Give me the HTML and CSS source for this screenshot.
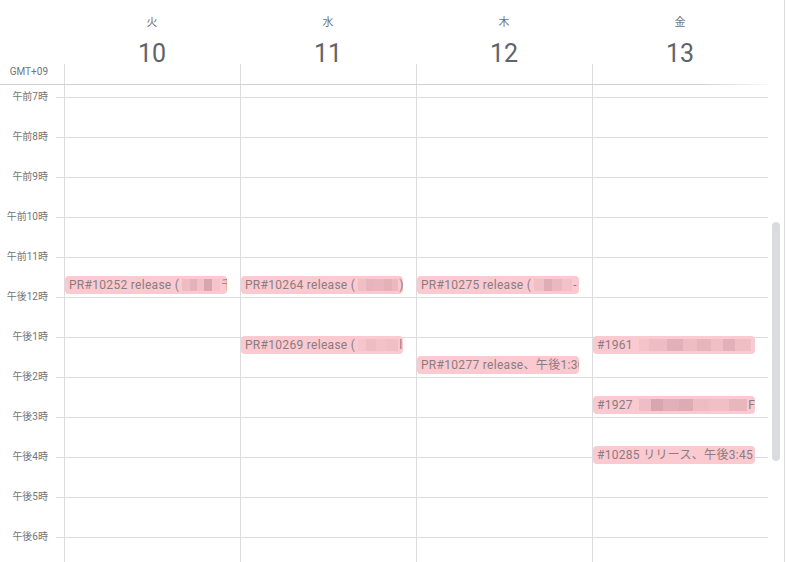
FILE: index.html
```html
<!DOCTYPE html>
<html lang="ja">

<head>
    <meta charset="UTF-8">
    <meta name="viewport" content="width=device-width, initial-scale=1.0">
    <title>Week</title>
    <link rel="stylesheet" href="styles.css">
</head>

<body>
    <div class="cal">
        <div class="main">
            <!-- day headers -->
            <div class="head">
                <div class="head-gutter"><span class="tz">GMT+09</span></div>
                <div class="head-day"><div class="dow">火</div><div class="date">10</div><div class="stub"></div></div>
                <div class="head-day"><div class="dow">水</div><div class="date">11</div><div class="stub"></div></div>
                <div class="head-day"><div class="dow">木</div><div class="date">12</div><div class="stub"></div></div>
                <div class="head-day"><div class="dow">金</div><div class="date">13</div><div class="stub"></div></div>
            </div>
            <div class="head-rule"></div>

            <div class="grid">
                <div class="gutter">
                    <div class="spacer"></div>
                    <div class="hour"><span class="lbl">午前7時</span><i class="tick"></i></div>
                    <div class="hour"><span class="lbl">午前8時</span><i class="tick"></i></div>
                    <div class="hour"><span class="lbl">午前9時</span><i class="tick"></i></div>
                    <div class="hour"><span class="lbl">午前10時</span><i class="tick"></i></div>
                    <div class="hour"><span class="lbl">午前11時</span><i class="tick"></i></div>
                    <div class="hour"><span class="lbl">午後12時</span><i class="tick"></i></div>
                    <div class="hour"><span class="lbl">午後1時</span><i class="tick"></i></div>
                    <div class="hour"><span class="lbl">午後2時</span><i class="tick"></i></div>
                    <div class="hour"><span class="lbl">午後3時</span><i class="tick"></i></div>
                    <div class="hour"><span class="lbl">午後4時</span><i class="tick"></i></div>
                    <div class="hour"><span class="lbl">午後5時</span><i class="tick"></i></div>
                    <div class="hour"><span class="lbl">午後6時</span><i class="tick"></i></div>
                </div>

                <div class="day">
                    <div class="spacer"></div>
                    <div class="slot"></div><div class="slot"></div><div class="slot"></div><div class="slot"></div>
                    <div class="slot"></div><div class="slot"></div><div class="slot"></div><div class="slot"></div>
                    <div class="slot"></div><div class="slot"></div><div class="slot"></div><div class="slot"></div>
                    <div class="event" style="top: 191px">PR#10252 release (<span class="blur b1"></span>千</div>
                </div>

                <div class="day">
                    <div class="spacer"></div>
                    <div class="slot"></div><div class="slot"></div><div class="slot"></div><div class="slot"></div>
                    <div class="slot"></div><div class="slot"></div><div class="slot"></div><div class="slot"></div>
                    <div class="slot"></div><div class="slot"></div><div class="slot"></div><div class="slot"></div>
                    <div class="event" style="top: 191px">PR#10264 release (<span class="blur b2"></span>)</div>
                    <div class="event" style="top: 251px">PR#10269 release (<span class="blur b3"></span>l</div>
                </div>

                <div class="day">
                    <div class="spacer"></div>
                    <div class="slot"></div><div class="slot"></div><div class="slot"></div><div class="slot"></div>
                    <div class="slot"></div><div class="slot"></div><div class="slot"></div><div class="slot"></div>
                    <div class="slot"></div><div class="slot"></div><div class="slot"></div><div class="slot"></div>
                    <div class="event" style="top: 191px">PR#10275 release (<span class="blur b4"></span>-</div>
                    <div class="event" style="top: 271px">PR#10277 release、午後1:30</div>
                </div>

                <div class="day">
                    <div class="spacer"></div>
                    <div class="slot"></div><div class="slot"></div><div class="slot"></div><div class="slot"></div>
                    <div class="slot"></div><div class="slot"></div><div class="slot"></div><div class="slot"></div>
                    <div class="slot"></div><div class="slot"></div><div class="slot"></div><div class="slot"></div>
                    <div class="event" style="top: 251px">#1961 <span class="blur b5"></span></div>
                    <div class="event" style="top: 311px">#1927 <span class="blur b6"></span>F</div>
                    <div class="event" style="top: 361px">#10285 リリース、午後3:45</div>
                </div>
            </div>
        </div>

        <div class="scroll"><div class="thumb"></div></div>
    </div>
</body>

</html>
```

FILE: styles.css
```css
body {
    margin: 0;
    padding: 0;
    background: #fff;
    font-family: Roboto, "Noto Sans CJK JP", sans-serif;
    color: #70757a;
}

.cal {
    display: flex;
    width: 787px;
    height: 562px;
    overflow: hidden;
}

.main {
    width: 768px;
}

/* header */

.head {
    display: flex;
    height: 84px;
}

.head-gutter {
    width: 64px;
    display: flex;
    flex-direction: column;
    justify-content: flex-end;
    align-items: flex-end;
    padding: 0 16px 5px 0;
    box-sizing: border-box;
}

.tz {
    font-size: 10px;
    line-height: 14px;
    color: #70757a;
}

.head-day {
    width: 176px;
    display: flex;
    flex-direction: column;
    align-items: center;
    padding-top: 16px;
    box-sizing: border-box;
}

.dow {
    font-size: 11px;
    line-height: 14px;
    color: #70757a;
}

.date {
    margin-top: 11px;
    margin-bottom: -3px;
    font-size: 25px;
    line-height: 26px;
    color: #60646a;
}

.stub {
    margin-top: auto;
    align-self: stretch;
    height: 20px;
    border-left: 1px solid #dadce0;
}

.head-rule {
    height: 1px;
    background: linear-gradient(to right, #cfd1d5 0, #cfd1d5 700px, rgba(218, 220, 224, 0.2) 768px);
}

/* time grid */

.grid {
    display: flex;
}

.spacer {
    height: 12px;
}

.gutter {
    width: 64px;
}

.hour {
    height: 40px;
    display: flex;
    justify-content: flex-end;
    align-items: flex-start;
}

.lbl {
    margin-top: -7px;
    padding-right: 8px;
    font-size: 10px;
    line-height: 14px;
    color: #70757a;
}

.tick {
    width: 8px;
    border-top: 1px solid #dadce0;
}

.day {
    position: relative;
    width: 176px;
    border-left: 1px solid #dadce0;
    box-sizing: border-box;
}

.slot {
    height: 40px;
    border-top: 1px solid #dadce0;
    box-sizing: border-box;
}

.event {
    position: absolute;
    left: 0;
    width: 162px;
    height: 18px;
    padding-left: 4px;
    box-sizing: border-box;
    border-radius: 4px;
    background: #fbc9d0;
    color: #8a7c80;
    font-size: 12px;
    letter-spacing: 0.3px;
    line-height: 18px;
    white-space: nowrap;
    overflow: hidden;
}

/* pixelated redacted bits */

.blur {
    display: inline-block;
    height: 12px;
    vertical-align: -2px;
    margin: 0 1px 0 3px;
}

.b1 {
    width: 38px;
    background: linear-gradient(to right, #efbcc4 0 8px, #e4b3ba 8px 15px, #f2c0c7 15px 22px, #d7a5ad 22px 30px, #f5c4cb 30px);
}

.b2 {
    width: 40px;
    background: linear-gradient(to right, #f0bec5 0 8px, #e6b4bb 8px 16px, #e9b6bd 16px 26px, #e3b1b8 26px 34px, #eab8bf 34px);
}

.b3 {
    width: 40px;
    background: linear-gradient(to right, #f6c4cb 0 8px, #eebcc3 8px 18px, #f3c1c8 18px 28px, #f0bec5 28px);
}

.b4 {
    width: 38px;
    background: linear-gradient(to right, #f1bfc6 0 10px, #dfadb5 10px 18px, #eab8bf 18px 28px, #f3c1c8 28px);
}

.b5 {
    width: 112px;
    background: linear-gradient(to right, #f4c2c9 0 10px, #eebcc3 10px 28px, #e2b0b8 28px 44px, #eebcc3 44px 58px, #e6b4bb 58px 72px, #f0bec5 72px 84px, #e2b0b8 84px 96px, #efbdc4 96px);
}

.b6 {
    width: 108px;
    background: linear-gradient(to right, #efbdc4 0 12px, #d8a6ae 12px 24px, #e2b0b8 24px 40px, #ddabb3 40px 54px, #eebcc3 54px 70px, #f1bfc6 70px 90px, #e8b6bd 90px);
}

/* scrollbar */

.scroll {
    width: 16px;
    border-right: 1px solid #dadce0;
}

.thumb {
    margin: 222px 0 0 4px;
    width: 8px;
    height: 239px;
    border-radius: 4px;
    background: #dadce0;
}
```
